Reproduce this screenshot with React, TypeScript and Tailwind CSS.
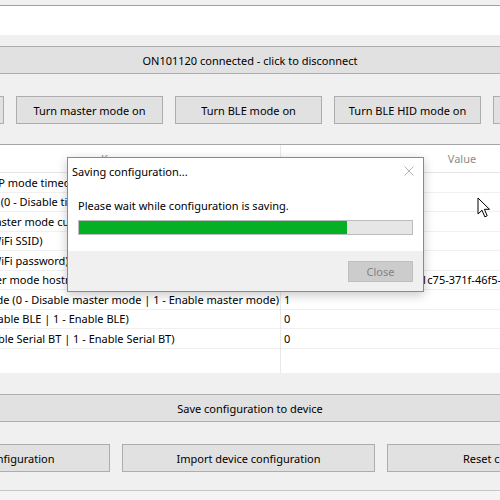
import React from "react";

const topButtons = ["Turn AP mode on", "Turn master mode on", "Turn BLE mode on", "Turn BLE HID mode on", "Turn Serial BT on"];
const bottomButtons = ["Export device configuration", "Import device configuration", "Reset configuration"];

const rows: [string, string][] = [
  ["Wi-Fi soft AP mode timeout (seconds)", "300"],
  ["AP timeout (0 - Disable timeout | 1 - Enable timeout)", "1"],
  ["Enabled master mode custom hostname", "0"],
  ["Network (WiFi SSID)", "ON"],
  ["Network (WiFi password)", "****"],
  ["Local master mode hostname", "ON101120-6a1e0b945d2c-1c75-371f-46f5-8e21a0"],
  ["Master mode (0 - Disable master mode | 1 - Enable master mode)", "1"],
  ["BLE (0 - Disable BLE | 1 - Enable BLE)", "0"],
  ["BT (0 - Disable Serial BT | 1 - Enable Serial BT)", "0"],
];

function WinButton({ label, className }: { label: string; className?: string }) {
  return (
    <div
      className={
        "h-[28px] shrink-0 flex items-center justify-center bg-[#e1e1e1] border border-[#adadad] whitespace-nowrap " +
        (className ?? "")
      }
    >
      {label}
    </div>
  );
}

function Cursor() {
  return (
    <svg className="absolute left-[477px] top-[197px]" width="14" height="22" viewBox="0 0 14 22">
      <path
        d="M1 1 L1 17 L5 13.2 L7.8 19.8 L10.2 18.8 L7.4 12.3 L12.5 12.3 Z"
        fill="#fff"
        stroke="#000"
        strokeWidth="1"
      />
    </svg>
  );
}

function SavingDialog() {
  return (
    <div className="absolute left-[67px] top-[157px] w-[357px] h-[135px] bg-white border border-[#8a8a8a] shadow-[0_3px_10px_rgba(0,0,0,0.22)] flex flex-col">
      <div className="h-[26px] flex items-center justify-between pl-[4px] pr-[9px]">
        <span>Saving configuration...</span>
        <svg width="10" height="10" viewBox="0 0 10 10">
          <path d="M0.5 0.5 L9.5 9.5 M9.5 0.5 L0.5 9.5" stroke="#b4b4b4" strokeWidth="1" />
        </svg>
      </div>
      <div className="flex-1 px-[10px] pt-[16px]">
        <div>Please wait while configuration is saving.</div>
        <div className="mt-[9px] h-[15px] w-[335px] bg-[#e6e6e6] border border-[#bcbcbc]">
          <div className="h-full w-[268px] bg-[#06b025]" />
        </div>
      </div>
      <div className="h-[40px] bg-[#f0f0f0] flex items-center justify-end pr-[10px]">
        <div className="w-[65px] h-[21px] flex items-center justify-center bg-[#cccccc] border border-[#bfbfbf] text-[#838383]">
          Close
        </div>
      </div>
    </div>
  );
}

function ConfigTable() {
  return (
    <div className="mt-[20px] h-[229px] bg-white border-t border-[#a5a5a5] overflow-hidden flex">
      {/* key column, right edge pinned at x=281 */}
      <div className="w-[281px] shrink-0 flex justify-end">
        <div className="flex flex-col shrink-0 border-r border-[#e8e8e8]">
          <div className="h-[28px] flex items-center justify-center border-b border-[#e5e5e5] text-[#8c8c8c]">Key</div>
          {rows.map(([k]) => (
            <div key={k} className="h-[19.5px] flex items-center whitespace-nowrap pr-[1px] border-b border-[#f0f0f0]">
              {k}
            </div>
          ))}
        </div>
      </div>
      <div className="w-[362px] shrink-0 flex flex-col">
        <div className="h-[28px] flex items-center justify-center border-b border-[#e5e5e5] text-[#8c8c8c]">Value</div>
        {rows.map(([k, v]) => (
          <div key={k} className="h-[19.5px] flex items-center pl-[3px] whitespace-nowrap border-b border-[#f0f0f0]">
            {v}
          </div>
        ))}
      </div>
    </div>
  );
}

export default function App() {
  return (
    <div className="relative w-[500px] h-[500px] overflow-hidden bg-[#f0f0f0] text-[11px] leading-none text-black font-['Noto_Sans',sans-serif]">
      <div className="h-[5px]" />
      <div className="-mx-[10px] h-[30px] bg-white border-t border-[#a0a0a0]" />

      <div className="mt-[11px] -mx-[10px]">
        <WinButton label="ON101120 connected - click to disconnect" className="w-full" />
      </div>

      <div className="mt-[22px] flex gap-[12px] ml-[-143px]">
        {topButtons.map((b) => (
          <WinButton key={b} label={b} className="w-[147px]" />
        ))}
      </div>

      <ConfigTable />

      <div className="mt-[21px] -mx-[10px]">
        <WinButton label="Save configuration to device" className="w-full" />
      </div>

      <div className="mt-[22px] flex gap-[12px] ml-[-143px]">
        {bottomButtons.map((b) => (
          <WinButton key={b} label={b} className="w-[253px]" />
        ))}
      </div>

      <div className="mt-[18px] -mx-[10px] border-t border-[#c8c8c8] h-[20px] bg-[#f4f4f4]" />

      <SavingDialog />
      <Cursor />
    </div>
  );
}
